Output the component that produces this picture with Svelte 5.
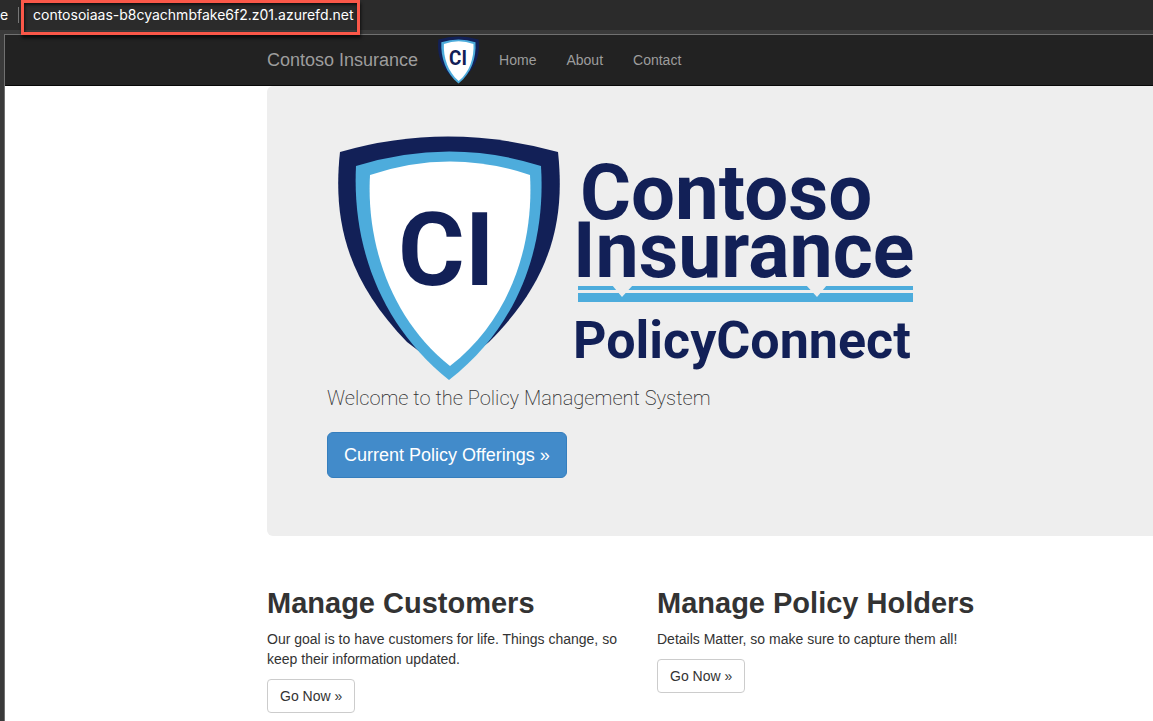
<script>
  const links = ['Home', 'About', 'Contact'];
  const sections = [
    { title: 'Manage Customers', text: 'Our goal is to have customers for life. Things change, so keep their information updated.' },
    { title: 'Manage Policy Holders', text: 'Details Matter, so make sure to capture them all!' }
  ];
</script>

{#snippet shield()}
  <path class="navy" d="M340 152Q447 121 558 152C566 225 548 283 489 342L449 374L407 342C350 283 332 225 340 152Z" />
  <path class="sky" d="M356 166Q450 137 541 166C546 245 520 325 449 380C380 325 352 245 356 166Z" />
  <path class="white" d="M370 175Q450 148 530 175C534 245 510 320 450 366C392 320 366 245 370 175Z" />
  <text class="navy mark" x="398" y="285" font-size="102">CI</text>
{/snippet}

<div class="window">
  <div class="address">
    <span class="scheme">e</span>
    <a class="url" href="#top">contosoiaas-b8cyachmbfake6f2.z01.azurefd.net</a>
  </div>

  <div class="page" id="top">
    <nav class="navbar">
      <a class="brand" href="#top">Contoso Insurance</a>
      <svg class="emblem" viewBox="338 134 222 248" preserveAspectRatio="none" aria-hidden="true">
        {@render shield()}
      </svg>
      <ul>
        {#each links as link}
          <li><a href="#top">{link}</a></li>
        {/each}
      </ul>
    </nav>

    <main>
      <header class="hero">
        <svg class="logo" viewBox="327 134 590 248" role="img" aria-label="Contoso Insurance PolicyConnect">
          {@render shield()}
          <text class="navy mark" x="580" y="219" font-size="78">Contoso</text>
          <text class="navy mark" x="573" y="277" font-size="77">Insurance</text>
          <path class="sky" d="M578 286H913V290H578ZM578 293H913V302H578Z" />
          <path class="gap" d="M612 285H633L622 297ZM806 285H827L817 297Z" />
          <text class="navy mark" x="573" y="358" font-size="52">PolicyConnect</text>
        </svg>
        <p>Welcome to the Policy Management System</p>
        <a class="button primary" href="#top">Current Policy Offerings »</a>
      </header>

      <div class="columns">
        {#each sections as section}
          <section>
            <h2>{section.title}</h2>
            <p>{section.text}</p>
            <a class="button" href="#top">Go Now »</a>
          </section>
        {/each}
      </div>
    </main>
  </div>
</div>

<style>
  :global(body) {
    margin: 0;
    background: #fff;
  }
  .window {
    box-sizing: border-box;
    min-height: 100vh;
    display: flex;
    flex-direction: column;
    overflow: hidden;
    background: #3a3a3a;
    color: #333;
    font: 14px/20px "Liberation Sans", Arial, sans-serif;
  }
  a {
    color: inherit;
    text-decoration: none;
  }
  .address {
    display: flex;
    align-items: flex-start;
    height: 30px;
    background: #2b2b2b;
    color: #fff;
    font: 400 14px/16px Inter, sans-serif;
  }
  .scheme {
    box-sizing: border-box;
    width: 19px;
    margin: 7px 2px 0 0;
    border-right: 1px solid #777;
  }
  .url {
    position: relative;
    z-index: 1;
    padding: 4px 3px 9px 9px;
    border: 3px solid #fb5849;
    box-shadow: 1px 3px 3px rgba(0, 0, 0, 0.65), inset 1px 2px 3px rgba(0, 0, 0, 0.65);
  }
  .page {
    flex: 1;
    margin: 4px 0 0 4px;
    border: solid #707070;
    border-width: 1px 0 0 1px;
    background: #fff;
  }
  .navbar {
    display: flex;
    align-items: center;
    height: 50px;
    padding-left: 262px;
    background: #222;
    border-bottom: 1px solid #080808;
    color: #9d9d9d;
  }
  .brand {
    font-size: 18px;
  }
  .emblem {
    width: 41px;
    height: 48px;
    margin-left: 20px;
  }
  .navbar ul {
    display: flex;
    gap: 30px;
    margin: 0;
    padding: 0 0 0 20px;
    list-style: none;
  }
  main {
    padding-left: 262px;
  }
  .hero {
    padding: 48px 0 58px 60px;
    border-radius: 6px 0 0 6px;
    background: #eee;
  }
  .logo {
    display: block;
    width: 590px;
    height: 248px;
  }
  .hero p {
    margin: 0 0 18px;
    font: 200 20px/32px Roboto, sans-serif;
  }
  .navy {
    fill: #122057;
  }
  .sky {
    fill: #4dacdc;
  }
  .white {
    fill: #fff;
  }
  .gap {
    fill: #eee;
  }
  .mark {
    font-family: Roboto, sans-serif;
    font-weight: 700;
  }
  .button {
    display: inline-block;
    padding: 6px 12px;
    border: 1px solid #ccc;
    border-radius: 4px;
    background: #fff;
  }
  .primary {
    padding: 10px 16px;
    border-color: #357ebd;
    border-radius: 6px;
    background: #428bca;
    color: #fff;
    font-size: 18px;
    line-height: 24px;
  }
  .columns {
    display: grid;
    grid-template-columns: repeat(auto-fill, 360px);
    gap: 30px;
    padding-top: 50px;
  }
  h2 {
    margin: 0 0 8px;
    font-size: 29px;
    line-height: 35px;
  }
  section p {
    margin: 0 0 10px;
  }
</style>
